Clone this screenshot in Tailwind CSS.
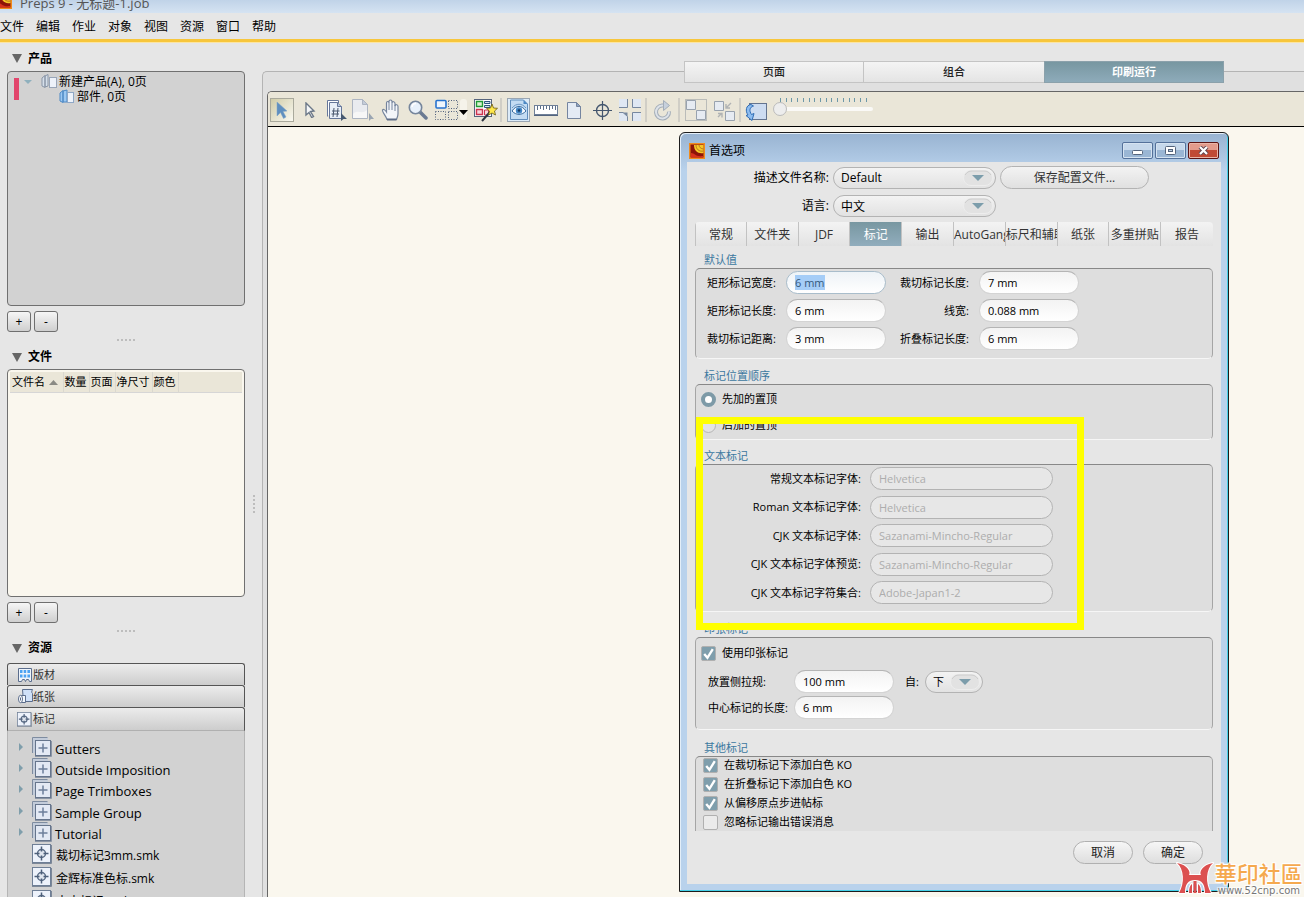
<!DOCTYPE html>
<html lang="zh-CN">
<head>
    <meta charset="UTF-8">
    <meta name="viewport" content="width=device-width, initial-scale=1.0">
    <title>Preps 9 - 无标题-1.job</title>
    <script src="https://cdn.jsdelivr.net/npm/@tailwindcss/browser@4"></script>
</head>
<body class="relative flex h-screen flex-col overflow-hidden bg-[#e6e6e6] font-['Open_Sans','Noto_Sans_CJK_SC',sans-serif] text-[12px] leading-4 text-black">

    <!-- Shared icons -->
    <svg class="hidden">
        <symbol id="app-icon" viewBox="0 0 16 16">
            <rect width="16" height="16" fill="#f08a1c"/>
            <rect x="1.5" y="1.5" width="13" height="13" fill="#8d1408"/>
            <path d="M2 10c4 0 4 4 12 3v1.500H2z" fill="#d8321c"/>
            <path d="M5 2c0 6 4 9 9.500 8V2z" fill="#f6c728"/>
            <path d="M7 2c0 4 3 7 7.500 6M10 2c0 2 2 4 4.500 4" fill="none" stroke="#b9781a"/>
        </symbol>
        <symbol id="group-icon" viewBox="0 0 20 20">
            <path d="M.5 16V.5h15" fill="none" stroke="#7e8ca0"/>
            <rect x="1" y="1" width="15" height="15" fill="#c3ccda"/>
            <rect x="3.500" y="3.500" width="15" height="15" fill="#e3e9f4" stroke="#66758c"/>
            <path d="M11 6.500v9M6.500 11h9" stroke="#6d7f9a" stroke-width="1.500"/>
            <path d="M3 19.500h16.500V4" fill="none" stroke="#8b95a5"/>
        </symbol>
        <symbol id="mark-icon" viewBox="0 0 20 20">
            <rect x=".5" y=".5" width="18" height="18" fill="#edf2fb" stroke="#6f7f96"/>
            <path d="M0 19.500h19.500V1" fill="none" stroke="#7c8797"/>
            <circle cx="9.500" cy="9.500" r="4" fill="#dfe5ee" stroke="#5a6c86" stroke-width="1.500"/>
            <path d="M9.500 2.500v5M9.500 11.500v5M2.500 9.500h5M11.500 9.500h5" stroke="#4d5f7a" stroke-width="1.500"/>
        </symbol>
        <symbol id="tick" viewBox="0 0 14 14">
            <path d="M3 7.500l3 3.500 5-8" fill="none" stroke="#fff" stroke-width="2.200"/>
        </symbol>
        <symbol id="select-arrow" viewBox="0 0 30 16">
            <rect x=".5" y=".5" width="29" height="15" rx="7.500" fill="#e2e2e2" stroke="#ededed"/>
            <path d="M2 5c2-3 4-4 7-4h12c3 0 5 1 7 4" fill="none" stroke="#cbcbcb"/>
            <path d="M9 5h12l-6 6z" fill="#7c9dab"/>
        </symbol>
    </svg>

    <header class="flex h-[13px] shrink-0 items-end gap-2 overflow-hidden bg-linear-to-b from-[#c0d3e8] to-[#d5e3f2]">
        <svg class="mb-1 h-4 w-3" viewBox="4 0 12 16"><use href="#app-icon" width="16" height="16"/></svg>
        <span class="text-[13px] leading-5 text-[#555]">Preps 9 - 无标题-1.job</span>
    </header>

    <nav class="flex h-[26px] shrink-0 items-center gap-3 pt-[2px]">
        <a href="#">文件</a>
        <a href="#">编辑</a>
        <a href="#">作业</a>
        <a href="#">对象</a>
        <a href="#">视图</a>
        <a href="#">资源</a>
        <a href="#">窗口</a>
        <a href="#">帮助</a>
    </nav>
    <div class="h-1 shrink-0 border-b border-[#fbe5a4] bg-[#f7c63c]"></div>

    <div class="flex min-h-0 flex-1">

        <!-- Sidebar -->
        <aside class="relative flex w-[262px] shrink-0 flex-col pr-[17px] pl-[7px]">
            <h2 class="flex h-7 shrink-0 items-center gap-[6px] pt-[3px] pl-[5px] font-bold">
                <svg class="h-[9px] w-[10px]" viewBox="0 0 10 9"><path d="M0 0h10L5 9z" fill="#666"/></svg>产品
            </h2>
            <div class="min-h-0 flex-[231] rounded-[4px] border border-[#707070] bg-[#d2d2d2] px-[6px] pt-[2px]">
                <ul class="border-l-[5px] border-transparent leading-[15px]">
                    <li class="relative flex items-center pl-[5px]">
                        <span class="absolute top-1 -left-[5px] h-[22px] w-[5px] bg-[#e2466c]"></span>
                        <svg class="mr-[9px] h-1 w-2" viewBox="0 0 8 4"><path d="M0 0h8L4 4z" fill="#8fb0bd"/></svg>
                        <svg class="mr-[2px] h-[15px] w-4" viewBox="0 0 16 15">
                            <path d="M1 12V4l3-2.500v12zM4 13V2l3-1.500V12z" fill="#d5dfea" stroke="#8995a6"/>
                            <rect x="8.500" y="3.500" width="7" height="10" fill="#edf2fa" stroke="#98a5b8"/>
                        </svg>
                        <span>新建产品(A), 0页</span>
                    </li>
                    <li class="flex items-center pl-10">
                        <svg class="mr-[2px] h-[15px] w-4" viewBox="0 0 16 15">
                            <path d="M1 12V4l3-2.500v12zM4 13V2l4-1v12z" fill="#9cc8f2" stroke="#4c88c4"/>
                            <rect x="8.500" y="3.500" width="6" height="10" fill="#edf2fa" stroke="#8ea7c6"/>
                        </svg>
                        <span>部件, 0页</span>
                    </li>
                </ul>
            </div>
            <div class="mt-[5px] flex gap-[3px]">
                <button class="h-[21px] w-6 rounded-[3px] border border-[#6f6f6f] bg-linear-to-b from-[#f6f6f6] to-[#cfcfcf] leading-5">+</button>
                <button class="h-[21px] w-6 rounded-[3px] border border-[#6f6f6f] bg-linear-to-b from-[#f6f6f6] to-[#cfcfcf] leading-5">-</button>
            </div>
            <div class="flex h-[10px] shrink-0 items-end justify-center">
                <span class="mb-[1px] w-[18px] border-t-2 border-dotted border-[#bdbdbd]"></span>
            </div>
            <h2 class="flex h-[27px] shrink-0 items-center gap-[6px] pt-[3px] pl-[5px] font-bold">
                <svg class="h-[9px] w-[10px]" viewBox="0 0 10 9"><path d="M0 0h10L5 9z" fill="#666"/></svg>文件
            </h2>
            <div class="min-h-0 flex-[222] rounded-[4px] border border-[#707070] bg-[#faf7ee] p-[2px]">
                <table class="w-full table-fixed bg-[#eae6d8] text-[11px]">
                    <thead>
                        <tr class="h-5 border-b border-[#d6d6d6] text-left">
                            <th class="w-[53px] border-r border-[#dad8d0] pl-[2px] font-normal whitespace-nowrap">文件名
                                <svg class="ml-[1px] inline h-[5px] w-[9px]" viewBox="0 0 9 5"><path d="M0 5h9L4.500 0z" fill="#8a8a84"/></svg>
                            </th>
                            <th class="w-[26px] border-r border-[#dad8d0] pl-[1px] font-normal whitespace-nowrap">数量</th>
                            <th class="w-[26px] border-r border-[#dad8d0] pl-[1px] font-normal whitespace-nowrap">页面</th>
                            <th class="w-[37px] border-r border-[#dad8d0] pl-[1px] font-normal whitespace-nowrap">净尺寸</th>
                            <th class="w-[26px] border-r border-[#dad8d0] pl-[1px] font-normal whitespace-nowrap">颜色</th>
                            <th></th>
                        </tr>
                    </thead>
                </table>
            </div>
            <div class="mt-[5px] flex gap-[3px]">
                <button class="h-[21px] w-6 rounded-[3px] border border-[#6f6f6f] bg-linear-to-b from-[#f6f6f6] to-[#cfcfcf] leading-5">+</button>
                <button class="h-[21px] w-6 rounded-[3px] border border-[#6f6f6f] bg-linear-to-b from-[#f6f6f6] to-[#cfcfcf] leading-5">-</button>
            </div>
            <div class="flex h-[10px] shrink-0 items-end justify-center">
                <span class="mb-[1px] w-[18px] border-t-2 border-dotted border-[#bdbdbd]"></span>
            </div>
            <h2 class="flex h-[30px] shrink-0 items-center gap-[6px] pl-[5px] font-bold">
                <svg class="h-[9px] w-[10px]" viewBox="0 0 10 9"><path d="M0 0h10L5 9z" fill="#666"/></svg>资源
            </h2>
            <div class="flex min-h-0 flex-[234] flex-col overflow-hidden">
                <button class="flex h-[22px] shrink-0 items-center gap-[1px] rounded-t-[3px] border border-b-0 border-[#555] bg-linear-to-b from-[#ececec] to-[#cdcdcd] pl-[10px] text-[11px] text-[#333]">
                    <svg class="h-[14px] w-[14px]" viewBox="0 0 14 14">
                        <path d="M.5.5h13v13h-2l-1-2h-2l-1 2-1-2h-2l-1 2h-3z" fill="#eef4fb" stroke="#5b6d8c"/>
                        <path d="M2 2h2.500v3H2zM5.700 2h2.500v3H5.700zM9.400 2H12v3H9.400zM2 6.500h2.500v3H2zM5.700 6.500h2.500v3H5.700zM9.400 6.500H12v3H9.400z" fill="#4ba3f3"/>
                    </svg>版材
                </button>
                <button class="flex h-[22px] shrink-0 items-center rounded-t-[3px] border border-b-0 border-[#555] bg-linear-to-b from-[#ececec] to-[#cdcdcd] pl-[10px] text-[11px] text-[#333]">
                    <svg class="h-[15px] w-[15px]" viewBox="0 0 15 15">
                        <path d="M4.500.5h10c-1 2-1 3 0 4v8h-9z" fill="#cfe0f8" stroke="#5b6d8c"/>
                        <path d="M2.500 6.500h5v7h-5z" fill="#f4f8fd" stroke="#5b6d8c"/>
                        <ellipse cx="2.500" cy="10" rx="2" ry="3.700" fill="#fff" stroke="#5b6d8c"/>
                        <path d="M2.500 8.500v3" stroke="#5b6d8c"/>
                    </svg>纸张
                </button>
                <button class="flex h-[24px] shrink-0 items-center gap-[1px] rounded-t-[3px] border border-[#555] border-b-[#b0b0b0] bg-linear-to-b from-[#ececec] to-[#cdcdcd] pl-[9px] text-[11px] text-[#333]">
                    <svg class="h-[15px] w-[15px]"><use href="#mark-icon"/></svg>标记
                </button>
                <ul class="min-h-0 flex-1 overflow-hidden border-x border-[#b5b5b5] bg-[#d2d2d2] pt-[5px] pl-[11px] text-[13px]">
                    <li class="flex h-[21px] items-center">
                        <svg class="mr-[9px] h-2 w-1" viewBox="0 0 4 8"><path d="M0 0v8l4-4z" fill="#7f9eab"/></svg>
                        <svg class="mr-[3px] h-5 w-5 shrink-0"><use href="#group-icon"/></svg><span class="pt-1">Gutters</span>
                    </li>
                    <li class="flex h-[21px] items-center">
                        <svg class="mr-[9px] h-2 w-1" viewBox="0 0 4 8"><path d="M0 0v8l4-4z" fill="#7f9eab"/></svg>
                        <svg class="mr-[3px] h-5 w-5 shrink-0"><use href="#group-icon"/></svg><span class="pt-1">Outside Imposition</span>
                    </li>
                    <li class="flex h-[22px] items-center">
                        <svg class="mr-[9px] h-2 w-1" viewBox="0 0 4 8"><path d="M0 0v8l4-4z" fill="#7f9eab"/></svg>
                        <svg class="mr-[3px] h-5 w-5 shrink-0"><use href="#group-icon"/></svg><span class="pt-1">Page Trimboxes</span>
                    </li>
                    <li class="flex h-[21px] items-center">
                        <svg class="mr-[9px] h-2 w-1" viewBox="0 0 4 8"><path d="M0 0v8l4-4z" fill="#7f9eab"/></svg>
                        <svg class="mr-[3px] h-5 w-5 shrink-0"><use href="#group-icon"/></svg><span class="pt-1">Sample Group</span>
                    </li>
                    <li class="flex h-[21px] items-center">
                        <svg class="mr-[9px] h-2 w-1" viewBox="0 0 4 8"><path d="M0 0v8l4-4z" fill="#7f9eab"/></svg>
                        <svg class="mr-[3px] h-5 w-5 shrink-0"><use href="#group-icon"/></svg><span class="pt-1">Tutorial</span>
                    </li>
                    <li class="flex h-[23px] items-center pl-[13px] text-[12px]">
                        <svg class="mr-1 h-5 w-5 shrink-0"><use href="#mark-icon"/></svg><span class="pt-1">裁切标记3mm.smk</span>
                    </li>
                    <li class="flex h-[23px] items-center pl-[13px] text-[12px]">
                        <svg class="mr-1 h-5 w-5 shrink-0"><use href="#mark-icon"/></svg><span class="pt-1">金辉标准色标.smk</span>
                    </li>
                    <li class="flex h-[23px] items-center pl-[13px] text-[12px]">
                        <svg class="mr-1 h-5 w-5 shrink-0"><use href="#mark-icon"/></svg><span class="pt-1">中央标记.smk</span>
                    </li>
                </ul>
            </div>
            <span class="absolute top-[452px] right-[7px] h-[18px] border-l-2 border-dotted border-[#bdbdbd]"></span>
        </aside>

        <!-- Work area -->
        <main class="mt-7 flex min-w-0 flex-1 flex-col rounded-tl-[5px] border-t border-l border-[#b4b4b4] bg-[#e0e0e0] pl-1">
            <div class="z-10 -mt-[11px] mb-2 ml-[417px] grid h-[22px] w-[540px] shrink-0 grid-cols-3 text-[11px]">
                <button class="border border-[#c4c4c4] bg-linear-to-b from-[#f4f4f4] to-[#e4e4e4] font-medium text-[#222]">页面</button>
                <button class="border-y border-[#c4c4c4] bg-linear-to-b from-[#f4f4f4] to-[#e4e4e4] font-medium text-[#222]">组合</button>
                <button class="border border-[#8ba1ab] bg-linear-to-b from-[#7897a1] to-[#8eabba] font-bold text-white">印刷运行</button>
            </div>
            <div class="flex min-h-0 flex-1 flex-col rounded-tl-[5px] border-t border-l border-[#666] bg-[#faf7ee]">
                <div class="flex h-[35px] shrink-0 items-center rounded-tl-[4px] border-b border-black bg-[#eae6d8] pt-[2px]">
                    <button class="flex h-7 w-7 items-center justify-center" aria-label="选择">
                        <svg class="h-6 w-6" viewBox="0 0 24 24">
                            <defs><linearGradient id="sel" x1="0" y1="0" x2="1" y2="1"><stop stop-color="#cfcba6"/><stop offset="1" stop-color="#fbfaf3"/></linearGradient></defs>
                            <rect x=".5" y=".5" width="23" height="23" fill="url(#sel)" stroke="#a9a99c"/>
                            <path d="M7 4l10 9-4 .5 3 5.500-2.500 1.500-3-6L7 18z" fill="#5f8fbf" stroke="#7ea4c8" stroke-width=".5"/>
                        </svg>
                    </button>
                    <button class="flex h-7 w-[27px] items-center justify-center" aria-label="直接选择">
                        <svg class="h-4 w-3" viewBox="0 0 12 16"><path d="M2 1l8 8-3.500.5 3 5-1.800 1-2.700-5L2 13z" fill="#f4f6f8" stroke="#6b7787" stroke-width="1.400"/></svg>
                    </button>
                    <button class="flex h-7 w-[27px] items-center justify-center" aria-label="页码">
                        <svg class="h-[23px] w-[22px]" viewBox="0 0 22 23">
                            <path d="M1.500 17.500v-16h11v3" fill="#fff" stroke="#66779a"/>
                            <path d="M3.500 19.500v-16h8l4 4v12z" fill="#e9eff8" stroke="#66779a"/>
                            <path d="M11.500 3.500v4h4" fill="#b9c7dc" stroke="#66779a"/>
                            <path d="M8 9l-1 9M12 9l-1 9M6 12h7.500M5.500 15H13" stroke="#4a586e" fill="none"/>
                            <path d="M15 14l6 6h-3.500L15 22z" fill="#46586f"/>
                        </svg>
                    </button>
                    <button class="flex h-7 w-[27px] items-center justify-center" aria-label="页面工具">
                        <svg class="h-[23px] w-[23px]" viewBox="0 0 23 23">
                            <path d="M.5 19.500V.5h10l5 5v14z" fill="#e9ebef" stroke="#adb5c2"/>
                            <path d="M10.500.5v5h5z" fill="#c4ccd8" stroke="#adb5c2"/>
                            <path d="M1 15c5-5 9 1 14-4v8H1z" fill="#f7f7f7"/>
                            <path d="M17 14l5 6h-3l-2 2z" fill="#9aa5b2"/>
                        </svg>
                    </button>
                    <button class="flex h-7 w-[27px] items-center justify-center" aria-label="手形">
                        <svg class="h-[22px] w-[20px]" viewBox="0 0 20 22">
                            <path d="M6 20.500C5 17 1 13 1.500 11c1-1.500 3 .5 4 2V4c0-2 2.500-2 2.500 0V2.500c0-2 3-2 3 0V4c0-2 3-1.500 3 .5V7c.5-2 3-1.500 3 .5v7c0 3-1 4-1.500 6z" fill="#f3f6fa" stroke="#75849c" stroke-width="1.200"/>
                            <path d="M8 4v7M11 4v7M14 6v6" stroke="#75849c"/>
                            <path d="M6 20.500h9.500" stroke="#5d6c86" stroke-width="2"/>
                        </svg>
                    </button>
                    <button class="flex h-7 w-[27px] items-center justify-center" aria-label="缩放">
                        <svg class="h-5 w-5" viewBox="0 0 20 20">
                            <path d="M11.500 11.500L18 18" stroke="#6a7a92" stroke-width="3.500" stroke-linecap="round"/>
                            <circle cx="7.500" cy="7.500" r="6.200" fill="#e8f1fb" stroke="#76869c" stroke-width="1.600"/>
                            <path d="M4 7a4 4 0 014-3.500" fill="none" stroke="#fff" stroke-width="1.500"/>
                        </svg>
                    </button>
                    <button class="flex h-7 w-[42px] items-center justify-center" aria-label="选框">
                        <svg class="h-[22px] w-[34px]" viewBox="0 0 34 22">
                            <rect x="25" y="0" width="7" height="21" rx="3" fill="#f5f3ea"/>
                            <rect x="1" y="1.500" width="10" height="7.500" rx="1" fill="#eef5fd" stroke="#2773cf" stroke-width="1.600"/>
                            <path d="M13.500 1.500h9v8h-9zM.5 12.500h10v8H.5zM13.500 12.500h9v8h-9z" fill="none" stroke="#50607c" stroke-dasharray="1 1.500"/>
                            <path d="M24 11h9l-4.500 5z" fill="#000"/>
                        </svg>
                    </button>
                    <button class="flex h-7 w-[25px] items-center justify-center" aria-label="自动拼版">
                        <svg class="h-6 w-6" viewBox="0 0 24 24">
                            <rect x=".5" y="1.500" width="17" height="17" fill="#fff" stroke="#56647c"/>
                            <path d="M2.500 3.500h6v5h-6z" fill="#d9f3d0" stroke="#1f9a35" stroke-width="1.400"/>
                            <path d="M10.500 3.500h5.500v2h-5.500zM10.500 7.500h5.500v2h-5.500z" fill="#d6e4f2" stroke="#2a577f"/>
                            <path d="M2.500 11.500h6v5h-6z" fill="#f8d4da" stroke="#cc3450" stroke-width="1.400"/>
                            <path d="M10.500 12h4v5h-4z" fill="#f8d4da" stroke="#cc3450"/>
                            <path d="M8 23l8-9" stroke="#2e3440" stroke-width="2"/>
                            <path d="M18 6l1.500 4 4 .3-3 2.700 1 4-3.500-2-3.500 2 1-4-3-2.700 4-.3z" fill="#ffe84a" stroke="#6b5a10" stroke-width=".8"/>
                        </svg>
                    </button>
                    <span class="mx-[2px] h-6 border-l-2 border-[#d0cec6]"></span>
                    <button class="flex h-7 w-7 items-center justify-center" aria-label="预览">
                        <svg class="h-6 w-[23px]" viewBox="0 0 23 24">
                            <rect x=".5" y=".5" width="22" height="23" fill="#dcebf8" stroke="#9aa6b2"/>
                            <path d="M3.500 2h13l4 4v15.500h-17z" fill="#c3dcf3" stroke="#5f8dbc"/>
                            <path d="M16.500 2v4h4z" fill="#4a87c4"/>
                            <path d="M5 13c4-6 10-6 14 0-4 4.500-10 4.500-14 0z" fill="#f5faff" stroke="#35699e"/>
                            <circle cx="12" cy="12.500" r="3.200" fill="#4286c6"/><circle cx="12" cy="12.500" r="1.300" fill="#173a60"/>
                            <path d="M5 10c4-5 10-5 14 0" fill="none" stroke="#6c98c4"/>
                        </svg>
                    </button>
                    <button class="flex h-7 w-7 items-center justify-center" aria-label="标尺">
                        <svg class="h-[11px] w-6" viewBox="0 0 24 11">
                            <rect x=".5" y=".5" width="23" height="9" fill="#fff" stroke="#6f8098"/>
                            <path d="M3.500 1v4M6.500 1v3M9.500 1v4M12.500 1v3M15.500 1v4M18.500 1v3M21.500 1v4" stroke="#5c6f8a"/>
                            <path d="M0 10.500h24" stroke="#53647f"/>
                        </svg>
                    </button>
                    <button class="flex h-7 w-7 items-center justify-center" aria-label="页面">
                        <svg class="h-[17px] w-[14px]" viewBox="0 0 14 17">
                            <path d="M.5.5h9l4 4v12H.5z" fill="#e4ebf5" stroke="#7585a0"/><path d="M9.500.5v4h4z" fill="#8ea4c2" stroke="#7585a0"/>
                        </svg>
                    </button>
                    <button class="flex h-7 w-7 items-center justify-center" aria-label="十字线">
                        <svg class="h-[19px] w-[19px]" viewBox="0 0 19 19">
                            <circle cx="9.500" cy="9.500" r="6" fill="none" stroke="#44566e" stroke-width="1.400"/><path d="M9.500 0v19M0 9.500h19" stroke="#44566e" stroke-width="1.200"/>
                        </svg>
                    </button>
                    <button class="flex h-7 w-7 items-center justify-center" aria-label="裁切标记">
                        <svg class="h-[22px] w-[22px]" viewBox="0 0 22 22">
                            <path d="M0 0h8v8H0zM14 0h8v8h-8zM0 14h8v8H0zM14 14h8v8h-8z" fill="#dfe7f3"/>
                            <path d="M0 8.500h8.500V0M22 8.500h-8.500V0M0 13.500h4l4.500 4V22M22 13.500h-8.500V22" fill="none" stroke="#76879f"/>
                            <path d="M4 13.500h4.500v4z" fill="#76879f"/>
                        </svg>
                    </button>
                    <span class="mx-[1px] h-6 border-l-2 border-[#d0cec6]"></span>
                    <button class="flex h-7 w-7 items-center justify-center" aria-label="旋转">
                        <svg class="h-[21px] w-[19px]" viewBox="0 0 19 21">
                            <path d="M12 5.500H9a6.500 6.500 0 107 6" fill="none" stroke="#a3adb8" stroke-width="4"/>
                            <path d="M12 5.500H9a6.500 6.500 0 107 6" fill="none" stroke="#dde2e8" stroke-width="2"/>
                            <path d="M10.500.5l6 5-6 5z" fill="#c6d0dc" stroke="#a3adb8"/>
                        </svg>
                    </button>
                    <span class="mx-[2px] h-6 border-l-2 border-[#d0cec6]"></span>
                    <button class="flex h-7 w-7 items-center justify-center" aria-label="编组">
                        <svg class="h-[22px] w-[22px]" viewBox="0 0 22 22">
                            <rect x=".5" y=".5" width="21" height="21" fill="none" stroke="#8b929b" stroke-dasharray="1 1"/>
                            <path d="M1.500 1.500h9v9h-9zM11.500 11.500h9v9h-9z" fill="#e6ebf2" stroke="#98a2ae"/>
                        </svg>
                    </button>
                    <button class="flex h-7 w-7 items-center justify-center" aria-label="取消编组">
                        <svg class="h-[21px] w-[21px]" viewBox="0 0 21 21">
                            <path d="M.5 1.500h9v9h-9zM11.500 11.500h9v9h-9z" fill="#e6ebf2" stroke="#98a2ae"/>
                            <path d="M12 8l5-5M12 4v4h4M8 13l-4 4M4 13.500h4v4" fill="none" stroke="#b0b3b4" stroke-width="1.400"/>
                        </svg>
                    </button>
                    <span class="mx-[1px] h-6 border-l-2 border-[#d0cec6]"></span>
                    <button class="flex h-7 w-7 items-end justify-center pb-[3px]" aria-label="翻转">
                        <svg class="h-[18px] w-[22px]" viewBox="0 0 22 18">
                            <rect x="4.500" y=".5" width="17" height="16" fill="#cddcf1" stroke="#64748f"/>
                            <path d="M6 1.500C1 2 0 8 3 12l-2 .5 6 5 2-7-2.500 1C4 8 4.500 4 8.500 3z" fill="#8cbcf0" stroke="#2f6cb4"/>
                        </svg>
                    </button>
                    <div class="ml-[3px] flex h-7 w-[100px] flex-col pt-[2px]">
                        <div class="mr-[6px] ml-[7px] flex h-1 shrink-0 justify-between">
                            <i class="w-px bg-[#6d98a8]"></i><i class="w-px bg-[#6d98a8]"></i><i class="w-px bg-[#6d98a8]"></i><i class="w-px bg-[#6d98a8]"></i>
                            <i class="w-px bg-[#6d98a8]"></i><i class="w-px bg-[#6d98a8]"></i><i class="w-px bg-[#6d98a8]"></i><i class="w-px bg-[#6d98a8]"></i>
                            <i class="w-px bg-[#6d98a8]"></i><i class="w-px bg-[#6d98a8]"></i><i class="w-px bg-[#6d98a8]"></i><i class="w-px bg-[#6d98a8]"></i>
                            <i class="w-px bg-[#6d98a8]"></i><i class="w-px bg-[#6d98a8]"></i><i class="w-px bg-[#6d98a8]"></i><i class="w-px bg-[#6d98a8]"></i>
                        </div>
                        <input type="range" value="0" aria-label="缩放比例" class="h-[14px] w-full appearance-none bg-transparent [&::-webkit-slider-runnable-track]:h-1 [&::-webkit-slider-runnable-track]:rounded-full [&::-webkit-slider-runnable-track]:bg-[#faf9f6] [&::-webkit-slider-thumb]:-mt-[5px] [&::-webkit-slider-thumb]:h-[14px] [&::-webkit-slider-thumb]:w-[14px] [&::-webkit-slider-thumb]:appearance-none [&::-webkit-slider-thumb]:rounded-full [&::-webkit-slider-thumb]:border [&::-webkit-slider-thumb]:border-[#bbb] [&::-webkit-slider-thumb]:bg-[#ededed]">
                    </div>
                </div>
            </div>
        </main>
    </div>

    <!-- Preferences window -->
    <div role="dialog" aria-labelledby="dialogTitle" class="absolute top-[132px] left-[679px] z-20 flex h-[760px] w-[550px] flex-col rounded-t-[6px] border border-[#1c1c1c] bg-linear-to-b from-[#98b3d1] to-[#b9d2ec] to-5% shadow-[inset_-1px_-1px_#45d0e8,inset_1px_1px_#e3eef8]">
        <div class="flex h-[29px] shrink-0 items-center gap-1 pt-[6px] pr-[9px] pl-[9px]">
            <svg class="h-4 w-4"><use href="#app-icon"/></svg>
            <h1 id="dialogTitle" class="flex-1">首选项</h1>
            <div class="flex gap-[2px]">
                <button class="flex h-[17px] w-[31px] items-center justify-center rounded-[2px] border border-[#54719a] bg-linear-to-b from-[#c6d8eb] from-50% to-[#9ab6d4] to-50% shadow-[inset_0_0_0_1px_#d5e3f1]" aria-label="最小化">
                    <svg class="mt-1 h-[5px] w-[11px]" viewBox="0 0 11 5"><rect x=".5" y=".5" width="10" height="4" rx="1" fill="#fff" stroke="#54647c"/></svg>
                </button>
                <button class="flex h-[17px] w-[31px] items-center justify-center rounded-[2px] border border-[#54719a] bg-linear-to-b from-[#c6d8eb] from-50% to-[#9ab6d4] to-50% shadow-[inset_0_0_0_1px_#d5e3f1]" aria-label="最大化">
                    <svg class="h-[9px] w-[11px]" viewBox="0 0 11 9"><rect x=".5" y=".5" width="10" height="8" rx="1" fill="#fff" stroke="#54647c"/><rect x="3.500" y="3.500" width="4" height="2" fill="#b7cbe0" stroke="#54647c"/></svg>
                </button>
                <button class="flex h-[17px] w-[31px] items-center justify-center rounded-[2px] border border-[#5c1414] bg-linear-to-b from-[#e39b8c] from-50% to-[#c04a35] to-50% shadow-[inset_0_0_0_1px_#eab5a8]" aria-label="关闭">
                    <svg class="h-[9px] w-[11px]" viewBox="0 0 11 9"><path d="M2 1l7 7M9 1L2 8" stroke="#5d4550" stroke-width="4"/><path d="M2 1l7 7M9 1L2 8" stroke="#fff" stroke-width="2.200"/></svg>
                </button>
            </div>
        </div>

        <form class="mx-[7px] mb-[7px] flex min-h-0 flex-1 flex-col bg-[#e6e6e6] pt-[4px]">
            <div class="grid grid-cols-[142px_163px_149px] items-center gap-x-1 gap-y-[6px]">
                <label for="profile" class="text-right">描述文件名称:</label>
                <div class="relative">
                    <select id="profile" class="h-[22px] w-full appearance-none rounded-full border border-[#b3b3b3] bg-linear-to-b from-[#f3f3f3] to-[#e2e2e2] pt-[1px] pl-[7px]"><option>Default</option></select>
                    <svg class="pointer-events-none absolute top-[3px] right-[3px] h-4 w-[30px]"><use href="#select-arrow"/></svg>
                </div>
                <button type="button" class="h-[23px] rounded-full border border-[#b3b3b3] bg-linear-to-b from-[#f3f3f3] to-[#e0e0e0] text-[#333]">保存配置文件...</button>
                <label for="language" class="text-right">语言:</label>
                <div class="relative">
                    <select id="language" class="h-[22px] w-full appearance-none rounded-full border border-[#b3b3b3] bg-linear-to-b from-[#f3f3f3] to-[#e2e2e2] pt-[1px] pl-[7px]"><option>中文</option></select>
                    <svg class="pointer-events-none absolute top-[3px] right-[3px] h-4 w-[30px]"><use href="#select-arrow"/></svg>
                </div>
            </div>

            <div class="mx-2 mt-[5px] grid h-6 shrink-0 grid-cols-10 divide-x divide-[#c2c2c2] overflow-hidden rounded-t-[4px] bg-linear-to-b from-[#f3f3f3] to-[#e3e3e3] text-[#333]">
                <button type="button" class="overflow-hidden border-l border-[#c2c2c2] pt-[2px] whitespace-nowrap">常规</button>
                <button type="button" class="overflow-hidden pt-[2px] whitespace-nowrap">文件夹</button>
                <button type="button" class="overflow-hidden pt-[2px] whitespace-nowrap">JDF</button>
                <button type="button" class="overflow-hidden bg-linear-to-b from-[#7897a1] to-[#91adbd] pt-[2px] whitespace-nowrap text-white">标记</button>
                <button type="button" class="overflow-hidden pt-[2px] whitespace-nowrap">输出</button>
                <button type="button" class="overflow-hidden pt-[2px] whitespace-nowrap">AutoGang</button>
                <button type="button" class="overflow-hidden pt-[2px] whitespace-nowrap">标尺和辅助线</button>
                <button type="button" class="overflow-hidden pt-[2px] whitespace-nowrap">纸张</button>
                <button type="button" class="overflow-hidden pt-[2px] whitespace-nowrap">多重拼贴</button>
                <button type="button" class="overflow-hidden pt-[2px] whitespace-nowrap">报告</button>
            </div>

            <div class="mx-2 flex flex-col text-[11px]">
                <h2 class="flex h-[22px] items-end pl-[9px] text-[#3c78a0]">默认值</h2>
                <div class="grid h-[91px] grid-cols-[80px_100px_73px_100px] content-start items-center gap-x-[10px] gap-y-[5px] rounded-[5px] border border-t-[#888] border-r-[#a5a5a5] border-b-[#f6f6f6] border-l-[#a5a5a5] bg-[#dedede] pt-[2px]">
                    <label for="rectWidth" class="text-right">矩形标记宽度:</label>
                    <input id="rectWidth" value="6 mm" class="h-[23px] w-full rounded-full border border-[#a9bdcb] bg-linear-to-b from-[#eef3f7] to-white px-2 outline-none selection:bg-[#a5cdf7] selection:text-[#34587c]">
                    <label for="trimLength" class="text-right">裁切标记长度:</label>
                    <input id="trimLength" value="7 mm" class="h-[23px] w-full rounded-full border border-[#d4d4d4] border-t-[#b5b5b5] bg-linear-to-b from-[#f3f3f3] to-white px-2">
                    <label for="rectLength" class="text-right">矩形标记长度:</label>
                    <input id="rectLength" value="6 mm" class="h-[23px] w-full rounded-full border border-[#d4d4d4] border-t-[#b5b5b5] bg-linear-to-b from-[#f3f3f3] to-white px-2">
                    <label for="lineWidth" class="text-right">线宽:</label>
                    <input id="lineWidth" value="0.088 mm" class="h-[23px] w-full rounded-full border border-[#d4d4d4] border-t-[#b5b5b5] bg-linear-to-b from-[#f3f3f3] to-white px-2">
                    <label for="trimDistance" class="text-right">裁切标记距离:</label>
                    <input id="trimDistance" value="3 mm" class="h-[23px] w-full rounded-full border border-[#d4d4d4] border-t-[#b5b5b5] bg-linear-to-b from-[#f3f3f3] to-white px-2">
                    <label for="foldLength" class="text-right">折叠标记长度:</label>
                    <input id="foldLength" value="6 mm" class="h-[23px] w-full rounded-full border border-[#d4d4d4] border-t-[#b5b5b5] bg-linear-to-b from-[#f3f3f3] to-white px-2">
                </div>

                <h2 class="flex h-[25px] items-end pl-[9px] text-[#3c78a0]">标记位置顺序</h2>
                <div class="flex h-14 flex-col gap-[10px] rounded-[5px] border border-t-[#888] border-r-[#a5a5a5] border-b-[#f6f6f6] border-l-[#a5a5a5] bg-[#dedede] pt-[6px] pl-[5px]">
                    <label class="flex items-center gap-[6px]">
                        <input type="radio" name="order" checked class="h-[15px] w-[15px] appearance-none rounded-full border border-[#a8b4ba] bg-[#eee] checked:border-4 checked:border-[#7d9aa7] checked:bg-white">先加的置顶
                    </label>
                    <label class="flex items-center gap-[6px]">
                        <input type="radio" name="order" class="h-[15px] w-[15px] appearance-none rounded-full border border-[#b5b5b5] bg-[#e4e4e4] checked:border-4 checked:border-[#7d9aa7] checked:bg-white">后加的置顶
                    </label>
                </div>

                <h2 class="flex h-[24px] items-end pl-[9px] text-[#3c78a0]">文本标记</h2>
                <div class="grid h-[148px] grid-cols-[165px_183px] content-between items-center gap-x-[9px] rounded-[5px] border border-t-[#888] border-r-[#a5a5a5] border-b-[#f6f6f6] border-l-[#a5a5a5] bg-[#dedede] pt-[2px] pb-[7px]">
                    <label for="textFont" class="text-right">常规文本标记字体:</label>
                    <input id="textFont" value="Helvetica" disabled class="h-[23px] w-full rounded-full border border-[#b3b3b3] bg-[#e7e7e7] px-2 text-[#adadad]">
                    <label for="romanFont" class="text-right">Roman 文本标记字体:</label>
                    <input id="romanFont" value="Helvetica" disabled class="h-[23px] w-full rounded-full border border-[#b3b3b3] bg-[#e7e7e7] px-2 text-[#adadad]">
                    <label for="cjkFont" class="text-right">CJK 文本标记字体:</label>
                    <input id="cjkFont" value="Sazanami-Mincho-Regular" disabled class="h-[23px] w-full rounded-full border border-[#b3b3b3] bg-[#e7e7e7] px-2 text-[#adadad]">
                    <label for="cjkPreview" class="text-right">CJK 文本标记字体预览:</label>
                    <input id="cjkPreview" value="Sazanami-Mincho-Regular" disabled class="h-[23px] w-full rounded-full border border-[#b3b3b3] bg-[#e7e7e7] px-2 text-[#adadad]">
                    <label for="cjkSet" class="text-right">CJK 文本标记字符集合:</label>
                    <input id="cjkSet" value="Adobe-Japan1-2" disabled class="h-[23px] w-full rounded-full border border-[#b3b3b3] bg-[#e7e7e7] px-2 text-[#adadad]">
                </div>

                <h2 class="flex h-[25px] items-end pl-[9px] text-[#3c78a0]">印张标记</h2>
                <div class="h-[93px] rounded-[5px] border border-t-[#888] border-r-[#a5a5a5] border-b-[#f6f6f6] border-l-[#a5a5a5] bg-[#dedede] pt-[7px] pl-[5px]">
                    <label class="flex items-center gap-[6px]">
                        <span class="grid">
                            <input type="checkbox" checked class="peer col-start-1 row-start-1 h-[15px] w-[15px] appearance-none rounded-[2px] border border-[#b0b0b0] bg-[#ebebeb] checked:bg-[#7f9eac]">
                            <svg class="pointer-events-none col-start-1 row-start-1 hidden h-[15px] w-[15px] peer-checked:block"><use href="#tick"/></svg>
                        </span>使用印张标记
                    </label>
                    <div class="mt-[9px] grid grid-cols-[79px_100px_17px_58px] items-center gap-x-[7px] gap-y-[3px] pl-[7px]">
                        <label for="sideGuide" class="whitespace-nowrap">放置侧拉规:</label>
                        <input id="sideGuide" value="100 mm" class="h-[23px] w-full rounded-full border border-[#d4d4d4] border-t-[#b5b5b5] bg-linear-to-b from-[#f3f3f3] to-white px-2">
                        <label for="from" class="pl-1 whitespace-nowrap">自:</label>
                        <div class="relative">
                            <select id="from" class="h-[22px] w-full appearance-none rounded-full border border-[#b3b3b3] bg-linear-to-b from-[#f3f3f3] to-[#e2e2e2] pl-[7px]"><option>下</option></select>
                            <svg class="pointer-events-none absolute top-[3px] right-[3px] h-4 w-[30px]"><use href="#select-arrow"/></svg>
                        </div>
                        <label for="centerLength" class="whitespace-nowrap">中心标记的长度:</label>
                        <input id="centerLength" value="6 mm" class="h-[23px] w-full rounded-full border border-[#d4d4d4] border-t-[#b5b5b5] bg-linear-to-b from-[#f3f3f3] to-white px-2">
                    </div>
                </div>

                <h2 class="flex h-[26px] items-end pl-[9px] text-[#3c78a0]">其他标记</h2>
                <div class="flex h-[75px] flex-col gap-[3px] rounded-t-[5px] border border-b-0 border-t-[#888] border-r-[#a5a5a5] border-l-[#a5a5a5] bg-[#dedede] pl-[7px]">
                    <label class="flex items-center gap-[6px]">
                        <span class="grid">
                            <input type="checkbox" checked class="peer col-start-1 row-start-1 h-[15px] w-[15px] appearance-none rounded-[2px] border border-[#b0b0b0] bg-[#ebebeb] checked:bg-[#7f9eac]">
                            <svg class="pointer-events-none col-start-1 row-start-1 hidden h-[15px] w-[15px] peer-checked:block"><use href="#tick"/></svg>
                        </span>在裁切标记下添加白色 KO
                    </label>
                    <label class="flex items-center gap-[6px]">
                        <span class="grid">
                            <input type="checkbox" checked class="peer col-start-1 row-start-1 h-[15px] w-[15px] appearance-none rounded-[2px] border border-[#b0b0b0] bg-[#ebebeb] checked:bg-[#7f9eac]">
                            <svg class="pointer-events-none col-start-1 row-start-1 hidden h-[15px] w-[15px] peer-checked:block"><use href="#tick"/></svg>
                        </span>在折叠标记下添加白色 KO
                    </label>
                    <label class="flex items-center gap-[6px]">
                        <span class="grid">
                            <input type="checkbox" checked class="peer col-start-1 row-start-1 h-[15px] w-[15px] appearance-none rounded-[2px] border border-[#b0b0b0] bg-[#ebebeb] checked:bg-[#7f9eac]">
                            <svg class="pointer-events-none col-start-1 row-start-1 hidden h-[15px] w-[15px] peer-checked:block"><use href="#tick"/></svg>
                        </span>从偏移原点步进帖标
                    </label>
                    <label class="flex items-center gap-[6px]">
                        <span class="grid">
                            <input type="checkbox" class="peer col-start-1 row-start-1 h-[15px] w-[15px] appearance-none rounded-[2px] border border-[#b0b0b0] bg-[#ebebeb] checked:bg-[#7f9eac]">
                            <svg class="pointer-events-none col-start-1 row-start-1 hidden h-[15px] w-[15px] peer-checked:block"><use href="#tick"/></svg>
                        </span>忽略标记输出错误消息
                    </label>
                </div>
            </div>

            <div class="mt-[10px] flex justify-end gap-[10px] pr-[18px]">
                <button type="button" class="h-[23px] w-[60px] rounded-full border border-[#b0b0b0] bg-linear-to-b from-[#f6f6f6] to-[#dedede] text-[#222]">取消</button>
                <button type="button" class="h-[23px] w-[60px] rounded-full border border-[#b0b0b0] bg-linear-to-b from-[#f6f6f6] to-[#dedede] text-[#222]">确定</button>
            </div>
        </form>
    </div>

    <!-- Highlight box -->
    <div class="pointer-events-none absolute top-[417px] left-[696px] z-30 h-[213px] w-[388px] border-[7px] border-[#ffff00]"></div>

    <!-- Site badge -->
    <div class="absolute right-0 bottom-0 z-40 flex items-end">
        <svg class="h-[36px] w-[38px]" viewBox="0 0 38 36">
            <path d="M1 2c11 2 14 9 12 12h12c-2-3 1-10 12-12-7 6-8 20-2 30h-6c0-9-3-13-10-13S9 23 9 32H3C9 22 8 8 1 2zM13 32c0-5 1-8 3-9v9zM22 32v-9c2 1 3 4 3 9z" fill="#dc5050" stroke="#fff" stroke-width="2" paint-order="stroke" stroke-linejoin="round"/>
            <path d="M17.500 20h3v12h-3z" fill="#dc5050"/>
        </svg>
        <div class="text-center [text-shadow:1px_1px_1px_#fff,-1px_-1px_1px_#fff,1px_-1px_1px_#fff,-1px_1px_1px_#fff]">
            <p class="font-['Noto_Sans_CJK_TC',sans-serif] text-[22px] leading-[26px] font-medium text-[#f5a94e]">華印社區</p>
            <p class="px-1 font-['DejaVu_Sans',sans-serif] text-[10px] leading-3 text-[#777]">www.52cnp.com</p>
        </div>
    </div>

    <script>
        // Select the first field when the window opens
        const rectWidth = document.getElementById('rectWidth');
        rectWidth.focus();
        rectWidth.select();
    </script>
</body>
</html>
